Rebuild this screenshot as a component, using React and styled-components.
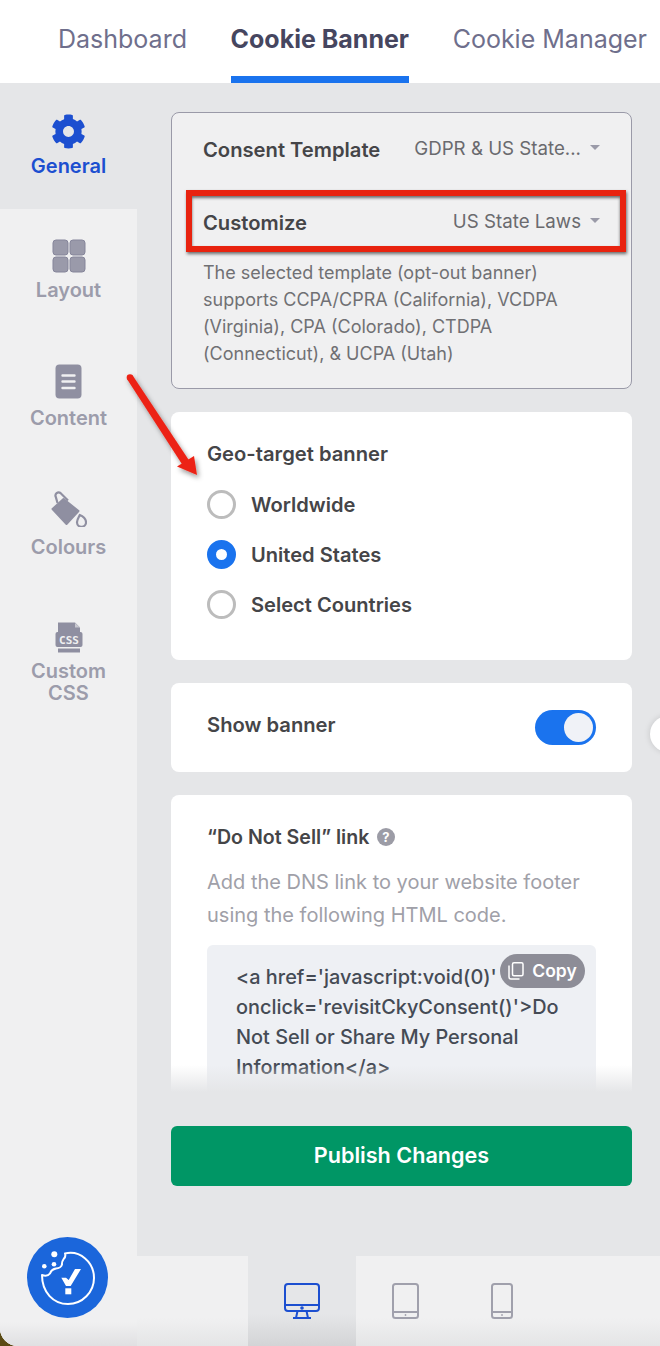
import React from "react";
import styled, { createGlobalStyle } from "styled-components";
import { FaCog } from "react-icons/fa";

const Global = createGlobalStyle`
  html, body {
    margin: 0;
    padding: 0;
    background: #5a4a14;
    font-family: Inter, "Noto Sans", sans-serif;
  }
  * { box-sizing: border-box; }
`;

const Page = styled.div`
  position: relative;
  width: 660px;
  height: 1346px;
  display: flex;
  flex-direction: column;
  overflow: hidden;
  background: #e5e6e8;
  border-bottom-left-radius: 18px;
`;

const Tabs = styled.div`
  height: 83px;
  flex: none;
  display: flex;
  align-items: stretch;
  padding-left: 58px;
  gap: 43.6px;
  background: #fff;
`;

const Tab = styled.div`
  height: 83px;
  padding-top: 22px;
  font-size: 25px;
  line-height: 34px;
  white-space: nowrap;
  font-weight: ${(p) => (p.$active ? 700 : 400)};
  color: ${(p) => (p.$active ? "#46465f" : "#6f6f8c")};
  border-bottom: 7px solid ${(p) => (p.$active ? "#1a73ee" : "transparent")};
`;

const Body = styled.div`
  flex: 1;
  display: flex;
  min-height: 0;
`;

const Sidebar = styled.div`
  width: 137px;
  flex: none;
  display: flex;
  flex-direction: column;
  background: #f0f0f1;
`;

const NavItem = styled.div`
  height: ${(p) => p.$h}px;
  padding-top: ${(p) => p.$top}px;
  display: flex;
  flex-direction: column;
  align-items: center;
  font-size: 20px;
  line-height: 21.5px;
  font-weight: 600;
  text-align: center;
  color: ${(p) => (p.$active ? "#1c4fd0" : "#9c9cab")};
  background: ${(p) => (p.$active ? "#e5e6e8" : "transparent")};
`;

const NavIcon = styled.div`
  height: 35px;
  margin-bottom: ${(p) => p.$gap ?? 7}px;
  display: flex;
  align-items: center;
  justify-content: center;
`;

const LogoWrap = styled.div`
  margin-top: auto;
  display: flex;
  padding: 0 0 28px 27px;
  background: linear-gradient(to bottom, #f0f0f1 0, #f0f0f1 85px, #e0e0e2 109px);
`;

const Content = styled.div`
  flex: 1;
  min-width: 0;
  display: flex;
  flex-direction: column;
`;

const Main = styled.div`
  flex: 1;
  display: flex;
  flex-direction: column;
  padding: 29px 28px 0 34px;
`;

const Scroll = styled.div`
  position: relative;
  height: 983px;
  display: flex;
  flex-direction: column;
  gap: 23px;
  overflow: hidden;
`;

const Fade = styled.div`
  position: absolute;
  left: 0;
  right: 0;
  bottom: 0;
  height: 30px;
  background: linear-gradient(to bottom, rgba(229, 230, 232, 0), #e5e6e8 90%);
`;

const TemplateCard = styled.div`
  flex: none;
  height: 277px;
  padding: 18px 31px 0;
  border: 1px solid #9a9aa8;
  border-radius: 8px;
  background: #f0f0f1;
`;

const SelectRow = styled.div`
  height: 37px;
  margin-bottom: ${(p) => p.$gap || 0}px;
  display: flex;
  align-items: center;
  justify-content: space-between;
`;

const Label = styled.div`
  font-size: 20.2px;
  font-weight: 600;
  color: #454548;
  white-space: nowrap;
`;

const SelectValue = styled.div`
  display: flex;
  align-items: center;
  gap: 9px;
  margin-top: -2px;
  font-size: 18.7px;
  color: #6a6a6e;
  white-space: nowrap;
`;

const Caret = styled.span`
  width: 0;
  height: 0;
  border-left: 5px solid transparent;
  border-right: 5px solid transparent;
  border-top: 5px solid #9a9aa8;
  margin-top: -3px;
`;

const Hint = styled.p`
  margin: 18px 0 0;
  font-size: 18px;
  line-height: 27px;
  color: #707074;
`;

const Card = styled.div`
  flex: none;
  height: ${(p) => (p.$h ? `${p.$h}px` : "auto")};
  padding: ${(p) => p.$pad || "28px 36px"};
  background: #fff;
  border-radius: 8px;
`;

const CardTitle = styled.div`
  font-size: ${(p) => p.$size || 20.2}px;
  line-height: 28px;
  font-weight: 600;
  color: #454548;
  display: flex;
  align-items: center;
  gap: 8px;
`;

const Radios = styled.div`
  margin-top: 22px;
  display: flex;
  flex-direction: column;
  gap: 21px;
`;

const RadioRow = styled.div`
  display: flex;
  align-items: center;
  gap: 15px;
  height: 29px;
  font-size: 20.1px;
  font-weight: 600;
  color: #454548;
`;

const RadioDot = styled.span`
  width: 29px;
  height: 29px;
  border-radius: 50%;
  background: #fff;
  border: ${(p) => (p.$on ? "9.5px solid #1a73ee" : "3px solid #bcbcbc")};
`;

const ToggleRow = styled(Card)`
  display: flex;
  align-items: center;
  justify-content: space-between;
`;

const ToggleLabel = styled(CardTitle)`
  padding-bottom: 6px;
`;

const Toggle = styled.div`
  width: 61px;
  height: 35px;
  padding: 3px;
  display: flex;
  justify-content: flex-end;
  border-radius: 18px;
  background: #1a73ee;
`;

const Thumb = styled.div`
  width: 29px;
  height: 29px;
  border-radius: 50%;
  background: #f0f2f7;
`;

const Desc = styled.p`
  margin: 15px 0 0;
  font-size: 20px;
  line-height: 33px;
  color: #a0a0a8;
`;

const CodeBox = styled.div`
  position: relative;
  margin-top: 13px;
  height: 190px;
  padding: 18px 20px 0 29px;
  border-radius: 6px;
  background: #eef0f4;
  font-size: 19.9px;
  line-height: 29.9px;
  font-weight: 500;
  color: #454b55;
`;

const CopyPill = styled.div`
  position: absolute;
  top: 9px;
  right: 11px;
  width: 85px;
  height: 34px;
  display: flex;
  align-items: center;
  justify-content: center;
  gap: 8px;
  border-radius: 17px;
  background: #8d8d97;
  color: #fff;
  font-size: 17.5px;
  line-height: 22px;
  font-weight: 600;
`;

const Publish = styled.div`
  flex: none;
  height: 60px;
  margin-top: 31px;
  padding-bottom: 2px;
  display: flex;
  align-items: center;
  justify-content: center;
  border-radius: 6px;
  background: #009665;
  color: #fff;
  font-size: 21.6px;
  font-weight: 600;
`;

const Devices = styled.div`
  flex: none;
  height: 90px;
  padding-left: 111px;
  display: flex;
  background: linear-gradient(to bottom, #f0f0f1 0, #f0f0f1 62px, #e4e5e6 90px);
`;

const Device = styled.div`
  width: ${(p) => p.$w}px;
  padding-top: 27px;
  display: flex;
  justify-content: center;
  background: ${(p) =>
    p.$active ? "linear-gradient(to bottom, #e5e6e8 0, #e5e6e8 58px, #d3d4d6 90px)" : "transparent"};
`;

const Handle = styled.div`
  position: absolute;
  left: 650px;
  top: 716px;
  width: 36px;
  height: 36px;
  border-radius: 50%;
  background: #fff;
  box-shadow: 0 0 6px rgba(0, 0, 0, 0.15);
`;

const Highlight = styled.div`
  position: absolute;
  left: 186px;
  top: 190px;
  width: 440px;
  height: 62px;
  border: 6px solid #e8230f;
  box-shadow: 1px 2px 3px rgba(40, 40, 40, 0.65), inset 0 2px 3px rgba(40, 40, 40, 0.65);
`;

const Arrow = styled.svg`
  position: absolute;
  left: 120px;
  top: 368px;
`;

const Gear = styled(FaCog)`
  width: 35px;
  height: 35px;
  color: #1c4fd0;
`;

const LayoutIcon = () => (
  <svg width="34" height="34" viewBox="0 0 34 34">
    <rect x="1" y="1" width="15" height="15" rx="3" fill="#9a9aaa" stroke="#85859a" />
    <rect x="18" y="1" width="15" height="15" rx="3" fill="#9a9aaa" stroke="#85859a" />
    <rect x="1" y="18" width="15" height="15" rx="3" fill="#9a9aaa" stroke="#85859a" />
    <rect x="18" y="18" width="15" height="15" rx="3" fill="#9a9aaa" stroke="#85859a" />
  </svg>
);

const ContentIcon = () => (
  <svg width="27" height="35" viewBox="0 0 27 35">
    <rect x="0.5" y="0.5" width="26" height="34" rx="4" fill="#8f8fa1" />
    <path d="M7.5 11.5h12M7.5 17.5h12M7.5 24h12" stroke="#f0f0f1" strokeWidth="2.4" strokeLinecap="round" />
  </svg>
);

const BucketIcon = () => (
  <svg width="36" height="36" viewBox="0 0 36 36">
    <path d="M1.5 18 L12.5 8 L27.5 20 L15.5 33 Z" fill="#8f8fa1" strokeLinejoin="round" stroke="#8f8fa1" strokeWidth="2" />
    <path d="M6.5 12 L4.8 6 A3.2 3.2 0 0 1 9.5 2 L17 9.5" fill="none" stroke="#8f8fa1" strokeWidth="2.2" />
    <path d="M28.8 24 C32 25 35 28 35 31 A4.5 4.5 0 0 1 26 31.5 C25.8 29 27.8 26 28.8 24 Z" fill="none" stroke="#8f8fa1" strokeWidth="2.2" />
  </svg>
);

const CssIcon = () => (
  <svg width="28" height="31" viewBox="0 0 28 31">
    <path d="M3 0.5 H20 L25 5.5 V10 H3 Z" fill="#8f8fa1" />
    <path d="M20 1 V5.5 H25" fill="#c8c8d0" />
    <rect x="0.5" y="10" width="27" height="15" rx="2" fill="#8f8fa1" />
    <rect x="3" y="26.5" width="22" height="4" fill="#8f8fa1" />
    <text x="14" y="21.6" textAnchor="middle" fontFamily="'DejaVu Sans Mono', monospace" fontWeight="700" fontSize="11" fill="#f0f0f1">CSS</text>
  </svg>
);

const CookieLogo = () => (
  <svg width="81" height="81" viewBox="0 0 81 81">
    <circle cx="40.5" cy="40.5" r="40.5" fill="#1b66db" />
    <path
      d="M38 16.5 C53 13 67 25 67 41 C67 55 55.5 67 41 67 C26.5 67 15 55.5 15 38 C18 39 21.5 38.5 23 36.5 C24 33.5 26.5 32 29 31.5 C32 31.5 34.5 29.5 35 27.5 C34.5 25 36 23 37 21.5 C38.5 20 38.5 18 38 16.5 Z"
      fill="none"
      stroke="#fff"
      strokeWidth="2"
      strokeLinejoin="round"
    />
    <circle cx="27.3" cy="17.3" r="3" fill="#fff" />
    <circle cx="27" cy="27.3" r="2.3" fill="#fff" />
    <circle cx="17.3" cy="29.3" r="2.3" fill="#fff" />
    <path d="M34.3 40.7h4.7l2.7 2.3L48 32h6l-10.3 17H39z" fill="#fff" />
    <rect x="38.3" y="51.3" width="6" height="6" fill="#fff" />
  </svg>
);

const MonitorIcon = () => (
  <svg width="36" height="36" viewBox="0 0 36 36" fill="none" stroke="#1c4fd0" strokeWidth="2">
    <rect x="1" y="1" width="34" height="27" rx="3" />
    <path d="M1 22h34M13.5 28l-1.5 7M22.5 28l1.5 7M9 35h18" />
    <circle cx="18" cy="25" r="0.8" fill="#1c4fd0" />
  </svg>
);

const TabletIcon = () => (
  <svg width="27" height="36" viewBox="0 0 27 36" fill="none" stroke="#a0a0ac" strokeWidth="2">
    <rect x="1" y="1" width="25" height="34" rx="2.5" />
    <path d="M1 29h25" />
    <path d="M12.5 32h2M13.5 31v2" strokeWidth="0.8" />
  </svg>
);

const PhoneIcon = () => (
  <svg width="22" height="36" viewBox="0 0 22 36" fill="none" stroke="#a0a0ac" strokeWidth="2">
    <rect x="1" y="1" width="20" height="34" rx="2.5" />
    <path d="M1 29h20" />
    <path d="M10 32h2M11 31v2" strokeWidth="0.8" />
  </svg>
);

const HelpIcon = () => (
  <svg width="18" height="18" viewBox="0 0 18 18">
    <circle cx="9" cy="9" r="9" fill="#9c9ca6" />
    <text x="9" y="14" textAnchor="middle" fontFamily="Inter, sans-serif" fontWeight="700" fontSize="13" fill="#fff">?</text>
  </svg>
);

const CopyIcon = () => (
  <svg width="16" height="18" viewBox="0 0 16 18" fill="none" stroke="#fff" strokeWidth="1.5">
    <rect x="4.5" y="0.8" width="10.5" height="13" rx="1.5" />
    <path d="M1 3.5v11.5a2 2 0 0 0 2 2h8.5" />
  </svg>
);

const RedArrow = () => (
  <Arrow width="90" height="120" viewBox="0 0 90 120">
    <defs>
      <filter id="arrowShadow" x="-30%" y="-30%" width="160%" height="160%">
        <feDropShadow dx="2" dy="3" stdDeviation="2.5" floodColor="#000" floodOpacity="0.4" />
      </filter>
    </defs>
    <g filter="url(#arrowShadow)" fill="#ec2415">
      <circle cx="10" cy="9.5" r="3.3" />
      <path d="M12.7 7.6 L69.3 92.7 L62.7 97.3 L7.3 11.4 Z" />
      <path d="M57 98.5 L77 107 L74 88 Z" />
    </g>
  </Arrow>
);

const App = () => {
  return (
    <Page>
      <Global />
      <Tabs>
        <Tab>Dashboard</Tab>
        <Tab $active>Cookie Banner</Tab>
        <Tab>Cookie Manager</Tab>
      </Tabs>
      <Body>
        <Sidebar>
          <NavItem $active $h={126} $top={31}>
            <NavIcon><Gear /></NavIcon>
            General
          </NavItem>
          <NavItem $h={127} $top={29}>
            <NavIcon><LayoutIcon /></NavIcon>
            Layout
          </NavItem>
          <NavItem $h={127} $top={28}>
            <NavIcon $gap={9}><ContentIcon /></NavIcon>
            Content
          </NavItem>
          <NavItem $h={129} $top={28}>
            <NavIcon $gap={11}><BucketIcon /></NavIcon>
            Colours
          </NavItem>
          <NavItem $h={120} $top={28}>
            <NavIcon $gap={6}><CssIcon /></NavIcon>
            Custom<br />CSS
          </NavItem>
          <LogoWrap><CookieLogo /></LogoWrap>
        </Sidebar>
        <Content>
          <Main>
            <Scroll>
              <TemplateCard>
                <SelectRow $gap={36}>
                  <Label>Consent Template</Label>
                  <SelectValue>GDPR &amp; US State... <Caret /></SelectValue>
                </SelectRow>
                <SelectRow>
                  <Label>Customize</Label>
                  <SelectValue>US State Laws <Caret /></SelectValue>
                </SelectRow>
                <Hint>
                  The selected template (opt-out banner) supports CCPA/CPRA (California), VCDPA (Virginia), CPA
                  (Colorado), CTDPA (Connecticut), &amp; UCPA (Utah)
                </Hint>
              </TemplateCard>
              <Card $h={248}>
                <CardTitle>Geo-target banner</CardTitle>
                <Radios>
                  <RadioRow><RadioDot />Worldwide</RadioRow>
                  <RadioRow><RadioDot $on />United States</RadioRow>
                  <RadioRow><RadioDot />Select Countries</RadioRow>
                </Radios>
              </Card>
              <ToggleRow $h={89} $pad="0 36px">
                <ToggleLabel>Show banner</ToggleLabel>
                <Toggle><Thumb /></Toggle>
              </ToggleRow>
              <Card $pad="28px 36px 0">
                <CardTitle $size={19.6}>“Do Not Sell” link <HelpIcon /></CardTitle>
                <Desc>Add the DNS link to your website footer using the following HTML code.</Desc>
                <CodeBox>
                  &lt;a href='javascript:void(0)' onclick='revisitCkyConsent()'&gt;Do Not Sell or Share My Personal Information&lt;/a&gt;
                  <CopyPill><CopyIcon />Copy</CopyPill>
                </CodeBox>
              </Card>
              <Fade />
            </Scroll>
            <Publish>Publish Changes</Publish>
          </Main>
          <Devices>
            <Device $active $w={108}><MonitorIcon /></Device>
            <Device $w={99}><TabletIcon /></Device>
            <Device $w={94}><PhoneIcon /></Device>
          </Devices>
        </Content>
      </Body>
      <Handle />
      <Highlight />
      <RedArrow />
    </Page>
  );
};

export default App;
